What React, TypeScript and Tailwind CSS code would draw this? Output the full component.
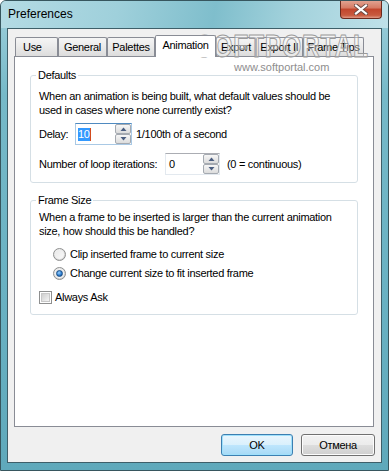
import React from "react";

function Tab({ label, w, selected, left }: { label: string; w: number; selected?: boolean; left?: boolean }) {
  if (selected) {
    return (
      <div
        style={{ width: w }}
        className="relative z-10 -mb-px flex h-[22px] items-start justify-center rounded-t-[2px] border border-b-0 border-[#898c95] bg-white pt-[3px] leading-[13px]"
      >
        {label}
      </div>
    );
  }
  return (
    <div
      style={{ width: w }}
      className={
        "flex h-[19px] items-center rounded-t-[2px] border border-b-0 border-[#898c95] bg-[linear-gradient(#f5f5f5,#ebebeb_45%,#dcdcdc)] leading-[13px] " +
        (left ? "justify-start pl-[7px]" : "justify-center")
      }
    >
      {label}
    </div>
  );
}

function SpinBtn({ up }: { up?: boolean }) {
  return (
    <div className="flex h-[10px] w-[16px] items-center justify-center rounded-[2px] border border-[#a5aab1] bg-[linear-gradient(#f7f7f7,#e9e9e9_50%,#dcdcdc)]">
      <svg width="7" height="4" viewBox="0 0 7 4">
        <path d={up ? "M0.5 4L3.5 0.5L6.5 4Z" : "M0.5 0L3.5 3.5L6.5 0Z"} fill="#4b5e80" />
      </svg>
    </div>
  );
}

function SpinBox({ w, value, focused }: { w: number; value: string; focused?: boolean }) {
  return (
    <div
      style={{ width: w }}
      className={
        "flex h-[22px] items-stretch border bg-white " +
        (focused
          ? "border-[#a9c9e5] border-t-[#4f8ac0]"
          : "border-[#e3e9ef] border-t-[#abadb3]")
      }
    >
      <div className="flex flex-1 items-center pl-[2px]">
        {focused ? (
          <span className="flex h-[13px] items-center bg-[#3399ff] leading-[13px] text-white">
            {value}
            <span className="inline-block h-[13px] w-[1px] bg-[#d24b1e]" />
          </span>
        ) : (
          <span className="pl-[1px] leading-[13px]">{value}</span>
        )}
      </div>
      <div className="flex flex-col justify-center">
        <SpinBtn up />
        <SpinBtn />
      </div>
    </div>
  );
}

function Radio({ checked }: { checked?: boolean }) {
  return (
    <div className="flex h-[13px] w-[13px] shrink-0 items-center justify-center rounded-full border border-[#8e8f8f] bg-[radial-gradient(circle_at_40%_35%,#ffffff,#d8d8d8_70%,#c4c4c4)]">
      <div className="flex h-[9px] w-[9px] items-center justify-center rounded-full bg-[linear-gradient(135deg,#e9e9e9,#f9f9f9)]">
        {checked && (
          <div className="h-[7px] w-[7px] rounded-full border border-[#1a4f86] bg-[radial-gradient(circle_at_40%_35%,#9ad1ff,#2f7fd0_55%,#0c3f84)]" />
        )}
      </div>
    </div>
  );
}

function Checkbox() {
  return (
    <div className="flex h-[13px] w-[13px] shrink-0 items-center justify-center border border-[#8e8f8f] bg-white">
      <div className="h-[9px] w-[9px] border border-[#c8c8c8] bg-[linear-gradient(135deg,#cfcfcf,#f4f4f4)]" />
    </div>
  );
}

export default function App() {
  return (
    <div
      className="relative flex h-[471px] w-[389px] flex-col overflow-hidden rounded-t-[6px] border border-[#37565e] bg-[linear-gradient(180deg,#9fd0dc_0%,#76b9c8_20%,#6ab2c3_60%,#5fa9bb_100%)] text-[11px] tracking-[-0.3px] text-black"
      style={{ fontFamily: '"Liberation Sans", Arial, sans-serif' }}
    >
      {/* Title bar */}
      <div className="flex h-[27px] items-start justify-between bg-[linear-gradient(100deg,#b4dbe4_0%,#9fd0db_30%,#7fbecc_55%,#a3d2dc_75%,#bfe1e9_100%)]">
        <div className="pl-[7px] pt-[6px] text-[12px] leading-[15px] tracking-normal text-black">Preferences</div>
        <div className="-mt-px mr-[6px] flex h-[19px] w-[42px] items-center justify-center rounded-b-[4px] border border-t-0 border-[#6b2a1e] bg-[linear-gradient(#e3a796_0%,#d67a63_45%,#c2452c_50%,#c85a3f_85%,#e09a86_100%)]">
          <svg width="14" height="11" viewBox="0 0 14 11">
            <path d="M2 1.5L12 9.5M12 1.5L2 9.5" stroke="#6b4a44" strokeWidth="4" strokeLinecap="square" />
            <path d="M2 1.5L12 9.5M12 1.5L2 9.5" stroke="#ffffff" strokeWidth="2.2" strokeLinecap="square" />
          </svg>
        </div>
      </div>

      {/* Client area */}
      <div className="mx-[6px] mb-[7px] flex flex-1 flex-col border border-[#3e5f69] bg-[#f0f0f0]">
        <div className="flex flex-col pl-[6px] pr-[7px] pt-[6px]">
          {/* Tabs */}
          <div className="flex h-[21px] items-end pl-[1px]">
            <Tab label="Use" w={43} left />
            <Tab label="General" w={49} />
            <Tab label="Palettes" w={48} />
            <Tab label="Animation" w={61} selected />
            <Tab label="Export" w={40} />
            <Tab label="Export II" w={47} />
            <Tab label="Frame Tips" w={61} />
          </div>
          {/* Panel */}
          <div className="flex h-[371px] w-[360px] flex-col border border-[#898c95] bg-white px-[15px]">
            <fieldset className="mt-[11px] rounded-[3px] border border-[#d5dfe5]">
              <legend className="ml-[5px] px-[2px] leading-[14px]">Defaults</legend>
              <div className="flex flex-col px-[8px] pb-[7px] pt-[7px]">
                <div className="whitespace-nowrap leading-[14px]">
                  When an animation is being built, what default values should be
                  <br />
                  used in cases where none currently exist?
                </div>
                <div className="mt-[6px] flex h-[22px] items-center">
                  <span className="w-[36px]">Delay:</span>
                  <SpinBox w={57} value="10" focused />
                  <span className="ml-[4px]">1/100th of a second</span>
                </div>
                <div className="mt-[8px] flex h-[22px] items-center">
                  <span className="w-[126px]">Number of loop iterations:</span>
                  <SpinBox w={55} value="0" />
                  <span className="ml-[7px]">(0 = continuous)</span>
                </div>
              </div>
            </fieldset>

            <fieldset className="mt-[10px] rounded-[3px] border border-[#d5dfe5]">
              <legend className="ml-[5px] px-[2px] leading-[14px]">Frame Size</legend>
              <div className="flex flex-col px-[8px] pb-[9px] pt-[3px]">
                <div className="whitespace-nowrap leading-[14px]">
                  When a frame to be inserted is larger than the current animation
                  <br />
                  size, how should this be handled?
                </div>
                <div className="mt-[9px] flex h-[15px] items-center pl-[14px]">
                  <Radio />
                  <span className="ml-[4px]">Clip inserted frame to current size</span>
                </div>
                <div className="mt-[4px] flex h-[15px] items-center pl-[14px]">
                  <Radio checked />
                  <span className="ml-[4px]">Change current size to fit inserted frame</span>
                </div>
                <div className="mt-[9px] flex h-[15px] items-center">
                  <Checkbox />
                  <span className="ml-[3px]">Always Ask</span>
                </div>
              </div>
            </fieldset>
          </div>
        </div>

        {/* Buttons */}
        <div className="mt-[7px] flex justify-end gap-[8px] pr-[6px]">
          <div className="flex h-[22px] w-[72px] items-center justify-center rounded-[3px] border border-[#3c7fb1] bg-[linear-gradient(#eaf6fd,#d9f0fc_50%,#bee6fd_50%,#a7d9f5)] shadow-[inset_0_0_0_1px_#9fe0fb]">
            OK
          </div>
          <div className="flex h-[22px] w-[74px] items-center justify-center rounded-[3px] border border-[#707070] bg-[linear-gradient(#f2f2f2,#ebebeb_50%,#dddddd_50%,#cfcfcf)] shadow-[inset_0_0_0_1px_#fcfcfc]">
            Отмена
          </div>
        </div>
      </div>

      {/* Watermark */}
      <div className="pointer-events-none absolute left-[195px] top-[27px] origin-left scale-x-[0.77] text-[32px] font-bold leading-[36px] tracking-[1px] text-[rgba(255,255,255,0.35)] [-webkit-text-stroke:1px_#9a9a9a]">
        SOFTPORTAL
      </div>
      <div className="pointer-events-none absolute left-[233px] top-[59px] text-[11px] leading-[14px] tracking-normal text-[#8e8e8e]">
        www.softportal.com
      </div>
    </div>
  );
}
